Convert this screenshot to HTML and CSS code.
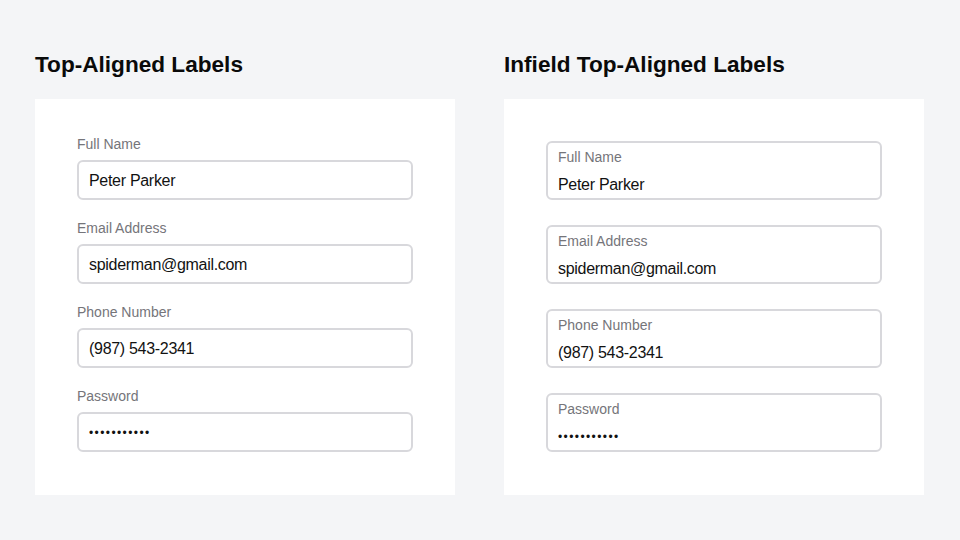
FILE: index.html
```html
<!DOCTYPE html>
<html lang="en">
<head>
    <meta charset="UTF-8">
    <meta name="viewport" content="width=device-width, initial-scale=1.0">
    <title>Form Label Styles</title>
    <link rel="stylesheet" href="styles.css">
</head>
<body>
<div class="columns">

    <!-- Labels above the fields -->
    <section class="column">
        <h2 class="title">Top-Aligned Labels</h2>
        <div class="card">
            <div class="field">
                <div class="label">Full Name</div>
                <div class="input">Peter Parker</div>
            </div>
            <div class="field">
                <div class="label">Email Address</div>
                <div class="input">spiderman@gmail.com</div>
            </div>
            <div class="field">
                <div class="label">Phone Number</div>
                <div class="input">(987) 543-2341</div>
            </div>
            <div class="field">
                <div class="label">Password</div>
                <div class="input dots">•••••••••••</div>
            </div>
        </div>
    </section>

    <!-- Labels inside the fields -->
    <section class="column">
        <h2 class="title">Infield Top-Aligned Labels</h2>
        <div class="card card-infield">
            <div class="infield">
                <div class="label">Full Name</div>
                <div class="value">Peter Parker</div>
            </div>
            <div class="infield">
                <div class="label">Email Address</div>
                <div class="value">spiderman@gmail.com</div>
            </div>
            <div class="infield">
                <div class="label">Phone Number</div>
                <div class="value">(987) 543-2341</div>
            </div>
            <div class="infield">
                <div class="label">Password</div>
                <div class="value dots">•••••••••••</div>
            </div>
        </div>
    </section>

</div>
</body>
</html>
```

FILE: styles.css
```css
body {
    margin: 0;
    background-color: #f4f5f7;
    font-family: "Liberation Sans", Arial, sans-serif;
    color: #121212;
}

.columns {
    display: flex;
    gap: 49px;
    padding: 51px 35px 0;
}

.column {
    width: 420px;
}

.title {
    margin: 0 0 20px;
    font-size: 22.6px;
    line-height: 28px;
    font-weight: 700;
    color: #0a0a0a;
}

.card {
    background-color: #fff;
    padding: 37px 42px 43px;
    display: flex;
    flex-direction: column;
    gap: 20px;
}

.card-infield {
    padding-top: 42px;
    gap: 25px;
}

.label {
    font-size: 14px;
    line-height: 16px;
    color: #75757a;
}

.field .label {
    margin-bottom: 8px;
}

.input {
    height: 20px;
    padding: 9px 10px 7px;
    border: 2px solid #d8d8dc;
    border-radius: 6px;
    font-size: 16px;
    line-height: 20px;
    letter-spacing: -0.3px;
}

.infield {
    padding: 6px 10px 3px;
    border: 2px solid #d8d8dc;
    border-radius: 6px;
}

.infield .label {
    margin-bottom: 10px;
}

.value {
    font-size: 16px;
    line-height: 20px;
    letter-spacing: -0.3px;
}

/* smaller bullets, same overall width */
.dots {
    font-size: 12px;
    letter-spacing: 1.4px;
}
```
